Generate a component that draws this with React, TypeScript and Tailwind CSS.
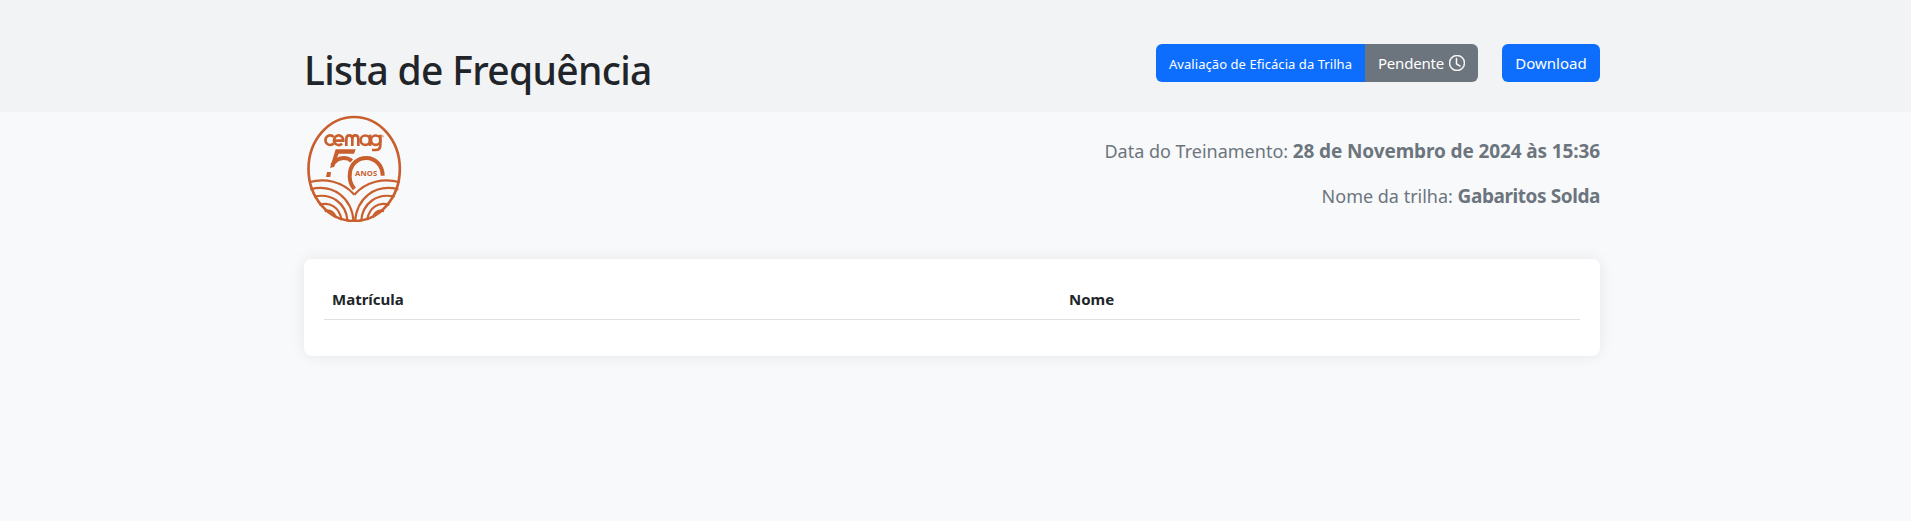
import { BsClock } from "react-icons/bs";

function Hill() {
  return (
    <g strokeWidth="6.5">
      <path d="M15 211 C62 197 116 208 151 248" />
      <path d="M19 232 C88 214 144 258 149 330" />
      <path d="M30 254 C82 242 126 272 131 328" />
      <path d="M46 279 C78 268 106 286 113 324" />
      <path d="M62 298 C78 292 91 300 96 318" />
    </g>
  );
}

function Logo() {
  return (
    <svg viewBox="0 0 300 330" className="h-[110px] w-[100px]" fill="none" stroke="#c95f2e">
      <ellipse cx="150.5" cy="171" rx="137" ry="156" strokeWidth="8" />
      <g strokeWidth="8">
        <path d="M89 75 A14 14.5 0 1 0 89 94" />
        <path d="M91 86 H118 A14 14.5 0 1 0 114 95" />
        <path d="M127 102 V81 Q127 70 136 70 Q145 70 145 81 V102 M145 81 Q145 70 154 70 Q163 70 163 81 V102" />
        <circle cx="184" cy="84.5" r="14" />
        <path d="M198 68 V102" />
        <circle cx="215" cy="84.5" r="14" />
        <path d="M229 68 V99 Q229 114 215 114 H204" />
      </g>
      <circle cx="236" cy="73" r="2.5" strokeWidth="1.5" />
      <path d="M95 112 H155 L150 125 H104 L98 140 L91 164 L78 168 Z" fill="#c95f2e" stroke="none" />
      <path d="M84 160 Q98 138 119 138 Q134 138 143 147" strokeWidth="12" />
      <path d="M69 180 H81 L79 195 H66 Z" fill="#c95f2e" stroke="none" />
      <path d="M151 231 C138 216 135 200 138 180 C142 155 162 138 187 138 C215 138 236 162 236 191" strokeWidth="12" />
      <text x="153" y="192" fill="#c95f2e" stroke="none" className="font-['Open_Sans',sans-serif] text-[23px] font-bold tracking-[0.5px]">ANOS</text>
      <Hill />
      <g transform="matrix(-1 0 0 1 302 0)">
        <Hill />
      </g>
    </svg>
  );
}

export default function App() {
  return (
    <div className="min-h-[521px] bg-[#f8f9fb] font-['Noto_Sans','Open_Sans',sans-serif] text-[#212529]">
      <header className="h-28 bg-[#f1f3f5] pl-[304px]">
        <div className="flex w-[1296px] items-start justify-between pt-11">
          <h1 className="pt-0.5 text-[39px] leading-[48px] font-medium tracking-[-0.68px] whitespace-nowrap">Lista de Frequência</h1>
          <div className="flex gap-6 text-[15px] leading-6 text-white">
            <div className="flex h-[38px]">
              <button className="w-[209px] rounded-l-md bg-[#0d6efd] pt-0.5 text-[13px] tracking-[0.06px] whitespace-nowrap">Avaliação de Eficácia da Trilha</button>
              <button className="flex w-[113px] items-center justify-center gap-[5px] rounded-r-md bg-[#6c757d]">
                <span className="tracking-[-0.2px]">Pendente</span>
                <BsClock className="size-4" strokeWidth={0.5} />
              </button>
            </div>
            <button className="h-[38px] w-[98px] rounded-md bg-[#0d6efd]">Download</button>
          </div>
        </div>
      </header>
      <main className="ml-[304px] w-[1296px]">
        <div className="flex h-[147px] justify-between">
          <Logo />
          <div className="flex flex-col items-end gap-[15px] pt-6 text-[18px] leading-[30px] text-[#6c757d]">
            <p>Data do Treinamento: <strong className="text-[19px] font-bold tracking-[-0.12px]">28 de Novembro de 2024 às 15:36</strong></p>
            <p>Nome da trilha: <strong className="text-[19px] font-bold tracking-[-0.42px]">Gabaritos Solda</strong></p>
          </div>
        </div>
        <section className="h-[97px] rounded-lg bg-white px-5 pt-5 shadow-[0_0_15px_rgba(0,0,0,0.08)]">
          <div className="flex h-[41px] border-b border-[#dee2e6] px-2 pt-2 text-[15px] leading-6 font-bold">
            <div className="w-[737px]">Matrícula</div>
            <div>Nome</div>
          </div>
        </section>
      </main>
    </div>
  );
}
